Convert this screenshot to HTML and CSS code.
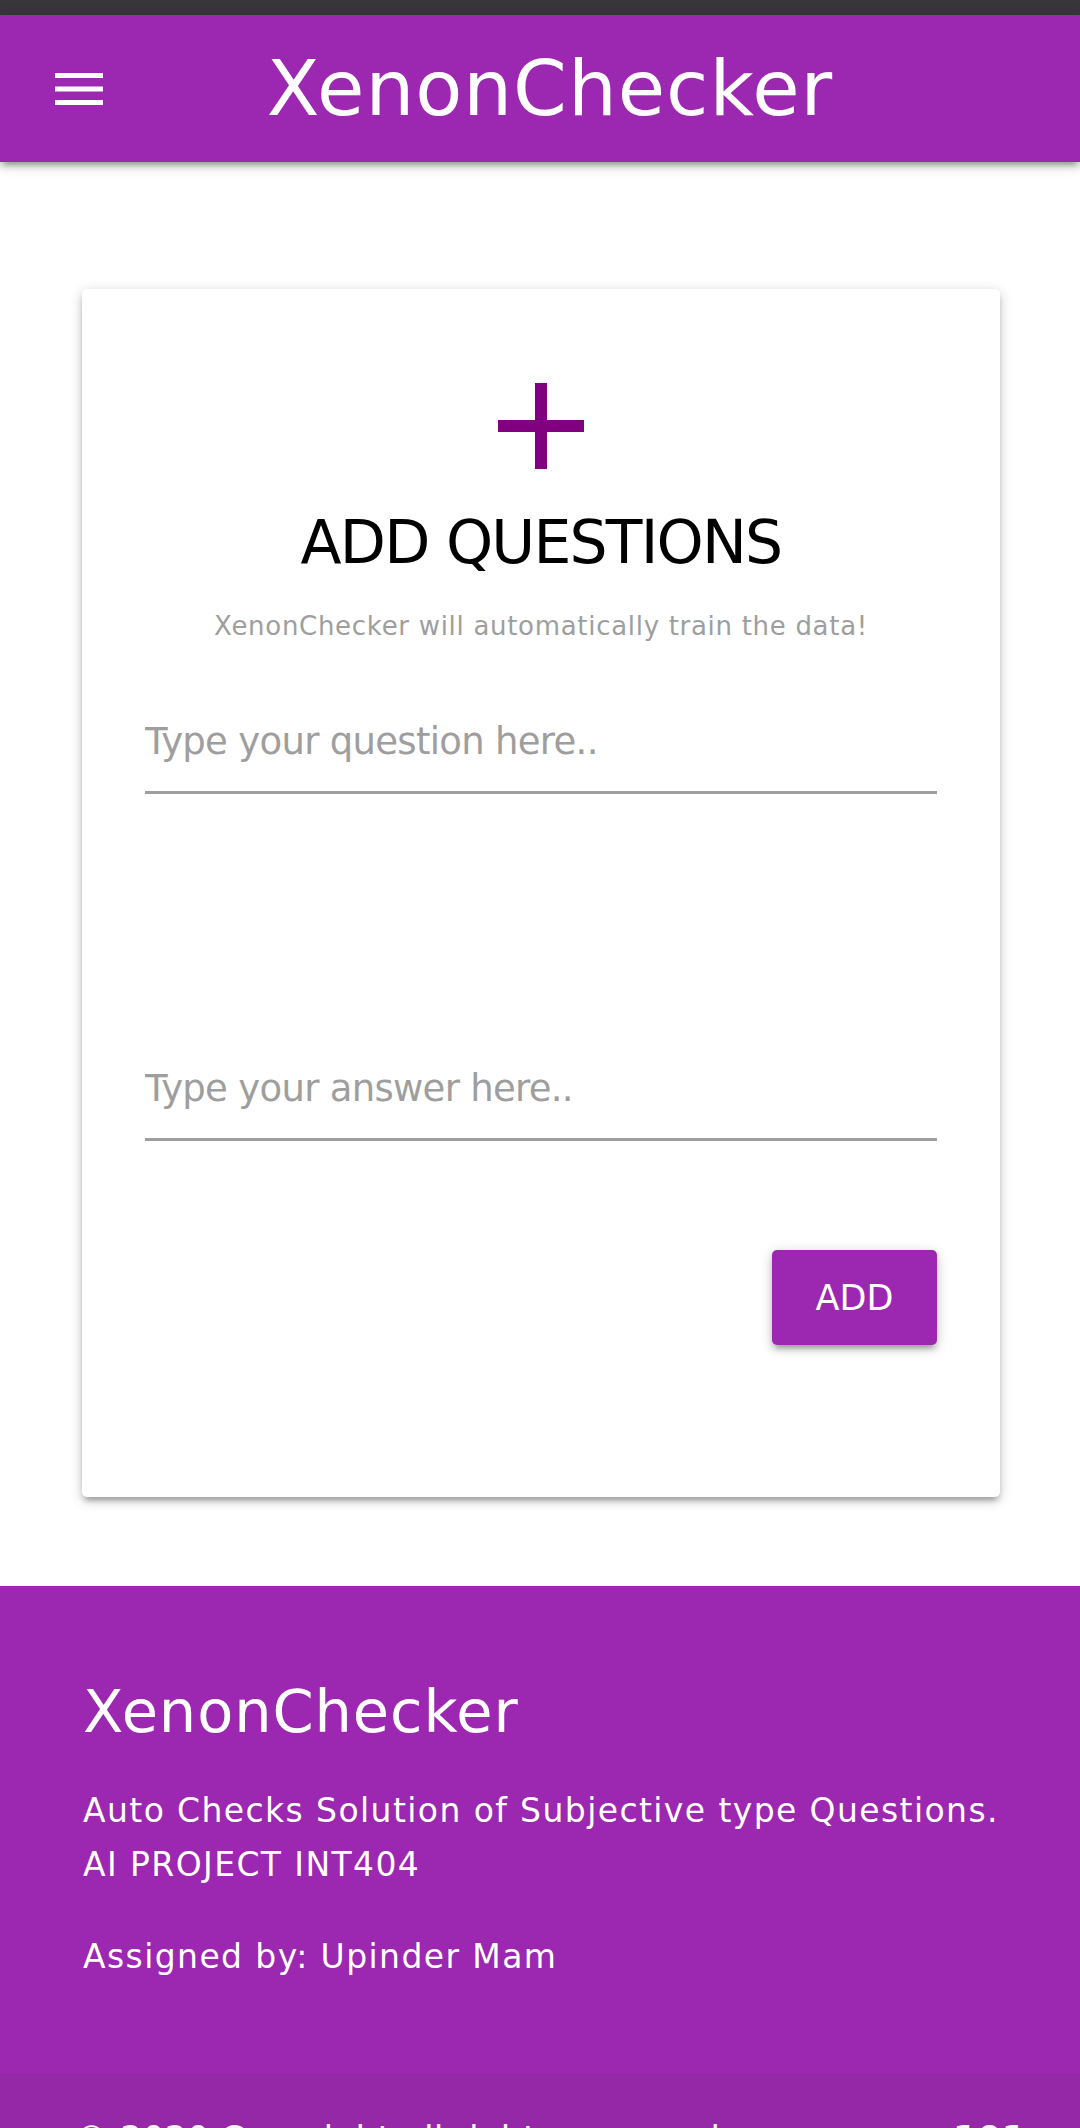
FILE: index.html
```html
<!DOCTYPE html>
<html lang="en">
<head>
<meta charset="utf-8">
<title>XenonChecker</title>
<link rel="stylesheet" href="styles.css">
</head>
<body>
<div class="statusbar"></div>
<nav class="nav">
  <a class="nav-menu" href="#" aria-label="Menu">
    <svg width="48" height="32" viewBox="0 0 48 32" fill="#ffffff"><rect x="0" y="0" width="48" height="5"/><rect x="0" y="13.5" width="48" height="5"/><rect x="0" y="27" width="48" height="5"/></svg>
  </a>
  <div class="brand">XenonChecker</div>
  <span class="nav-spacer"></span>
</nav>

<main class="page">
  <section class="card">
    <div class="card-icon">
      <svg width="86" height="86" viewBox="0 0 86 86"><rect x="37" y="0" width="12" height="86" fill="#800080"/><rect x="0" y="37" width="86" height="12" fill="#800080"/></svg>
    </div>
    <h2 class="card-title">ADD QUESTIONS</h2>
    <p class="card-sub">XenonChecker will automatically train the data!</p>
    <form class="qa-form">
      <input class="field field-question" type="text" placeholder="Type your question here..">
      <input class="field field-answer" type="text" placeholder="Type your answer here..">
      <div class="actions">
        <button class="btn" type="button">ADD</button>
      </div>
    </form>
  </section>
</main>

<footer class="footer">
  <div class="footer-body">
    <h5 class="footer-title">XenonChecker</h5>
    <p class="footer-text"><span>Auto Checks Solution of Subjective type Questions.</span><span>AI PROJECT INT404</span></p>
    <p class="footer-text"><span>Assigned by: Upinder Mam</span></p>
  </div>
  <div class="copyright">
    <span>© 2020 Copyright all rights reserved</span>
    <span class="copyright-right">101</span>
  </div>
</footer>
</body>
</html>
```

FILE: styles.css
```css
* { box-sizing: border-box; }
html, body { margin: 0; padding: 0; }
body {
  font-family: "DejaVu Sans", "Noto Sans", sans-serif;
  background: #ffffff;
  color: #000;
  width: 1080px;
}

.statusbar {
  height: 15px;
  background: #36363b;
}

.nav {
  height: 147px;
  background: #9c27b0;
  display: grid;
  grid-template-columns: 1fr auto 1fr;
  align-items: center;
  box-shadow: 0 5px 5px 0 rgba(0,0,0,0.14), 0 8px 3px -5px rgba(0,0,0,0.12), 0 3px 13px 0 rgba(0,0,0,0.2);
  position: relative;
  z-index: 2;
}
.nav-menu {
  justify-self: start;
  margin-left: 55px;
  display: flex;
  width: 48px;
  height: 32px;
}
.brand {
  color: #ffffff;
  font-size: 77px;
  line-height: 147px;
  letter-spacing: 1px;
  margin-left: 20px;
  white-space: nowrap;
}

.page {
  padding: 127px 80px 89px 82px;
}

.card {
  background: #fff;
  border-radius: 5px;
  padding: 94px 63px 152px;
  box-shadow: 0 5px 5px 0 rgba(0,0,0,0.14), 0 8px 3px -5px rgba(0,0,0,0.12), 0 3px 13px 0 rgba(0,0,0,0.2);
}
.card-icon {
  display: flex;
  justify-content: center;
  height: 86px;
}
.card-title {
  margin: 43px 0 0;
  font-weight: normal;
  font-size: 60px;
  line-height: 60px;
  letter-spacing: -1.8px;
  text-align: center;
  color: #000;
}
.card-sub {
  margin: 41px 0 0;
  font-size: 26px;
  line-height: 26px;
  letter-spacing: 0.7px;
  text-align: center;
  color: #9e9e9e;
}

.qa-form {
  display: flex;
  flex-direction: column;
  margin-top: 52px;
}
.field {
  display: block;
  width: 100%;
  height: 103px;
  padding: 0;
  border: none;
  border-bottom: 3px solid #9e9e9e;
  outline: none;
  background: transparent;
  font-family: "DejaVu Sans", "Noto Sans", sans-serif;
  font-size: 37px;
  letter-spacing: -0.7px;
  color: #000;
}
.field::placeholder { color: #9e9e9e; opacity: 1; }
.field-answer { margin-top: 244px; }

.actions {
  display: flex;
  justify-content: flex-end;
  margin-top: 109px;
}
.btn {
  width: 165px;
  height: 95px;
  border: none;
  border-radius: 5px;
  background: #9c27b0;
  color: #fff;
  font-family: "DejaVu Sans", "Noto Sans", sans-serif;
  font-size: 35px;
  display: flex;
  align-items: center;
  justify-content: center;
  padding: 0;
  box-shadow: 0 5px 5px 0 rgba(0,0,0,0.14), 0 8px 3px -5px rgba(0,0,0,0.12), 0 3px 13px 0 rgba(0,0,0,0.2);
}

.footer {
  background: #9c27b0;
  color: #fff;
}
.footer-body {
  padding: 96px 80px 89px 83px;
}
.footer-title {
  margin: 0;
  font-weight: normal;
  font-size: 59px;
  line-height: 59px;
  letter-spacing: 0.9px;
}
.footer-text {
  margin: 43px 0 0;
  font-size: 33px;
  line-height: 54px;
  letter-spacing: 1.4px;
}
.footer-text + .footer-text { margin-top: 38px; }
.footer-text span { display: block; white-space: nowrap; }

.copyright {
  background: #9428a6;
  display: flex;
  justify-content: space-between;
  padding: 49px 54px 60px 74px;
  font-size: 35px;
  line-height: 35px;
  color: #f5f5f5;
}
.copyright-right { font-weight: bold; }
```
